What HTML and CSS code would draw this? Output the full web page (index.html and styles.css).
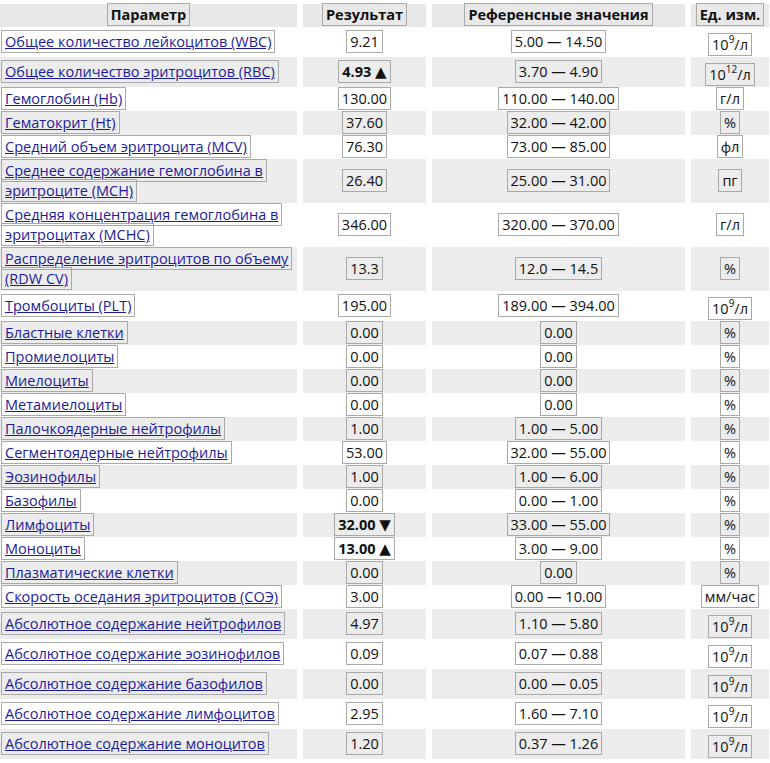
FILE: index.html
```html
<!DOCTYPE html>
<html lang="ru">
<head>
<meta charset="utf-8">
<title>Результаты анализа</title>
<link rel="stylesheet" href="styles.css">
</head>
<body>
<table class="results">
  <colgroup>
    <col class="c-param">
    <col class="c-result">
    <col class="c-ref">
    <col class="c-unit">
  </colgroup>
  <thead>
    <tr>
      <th><span class="box">Параметр</span></th>
      <th><span class="box">Результат</span></th>
      <th><span class="box">Референсные значения</span></th>
      <th><span class="box">Ед. изм.</span></th>
    </tr>
  </thead>
  <tbody>
    <tr><td class="param"><span class="box"><a href="#">Общее количество лейкоцитов (WBC)</a></span></td><td><span class="box">9.21</span></td><td><span class="box">5.00 — 14.50</span></td><td><span class="box">10<sup>9</sup>/л</span></td></tr>
    <tr><td class="param"><span class="box"><a href="#">Общее количество эритроцитов (RBC)</a></span></td><td><span class="box flag">4.93 <span class="arrow">▲</span></span></td><td><span class="box">3.70 — 4.90</span></td><td><span class="box">10<sup>12</sup>/л</span></td></tr>
    <tr><td class="param"><span class="box"><a href="#">Гемоглобин (Hb)</a></span></td><td><span class="box">130.00</span></td><td><span class="box">110.00 — 140.00</span></td><td><span class="box">г/л</span></td></tr>
    <tr><td class="param"><span class="box"><a href="#">Гематокрит (Ht)</a></span></td><td><span class="box">37.60</span></td><td><span class="box">32.00 — 42.00</span></td><td><span class="box">%</span></td></tr>
    <tr><td class="param"><span class="box"><a href="#">Средний объем эритроцита (MCV)</a></span></td><td><span class="box">76.30</span></td><td><span class="box">73.00 — 85.00</span></td><td><span class="box">фл</span></td></tr>
    <tr><td class="param"><span class="box"><a href="#">Среднее содержание гемоглобина в эритроците (MCH)</a></span></td><td><span class="box">26.40</span></td><td><span class="box">25.00 — 31.00</span></td><td><span class="box">пг</span></td></tr>
    <tr><td class="param"><span class="box"><a href="#">Средняя концентрация гемоглобина в эритроцитах (MCHC)</a></span></td><td><span class="box">346.00</span></td><td><span class="box">320.00 — 370.00</span></td><td><span class="box">г/л</span></td></tr>
    <tr><td class="param"><span class="box"><a href="#">Распределение эритроцитов по объему (RDW CV)</a></span></td><td><span class="box">13.3</span></td><td><span class="box">12.0 — 14.5</span></td><td><span class="box">%</span></td></tr>
    <tr><td class="param"><span class="box"><a href="#">Тромбоциты (PLT)</a></span></td><td><span class="box">195.00</span></td><td><span class="box">189.00 — 394.00</span></td><td><span class="box">10<sup>9</sup>/л</span></td></tr>
    <tr><td class="param"><span class="box"><a href="#">Бластные клетки</a></span></td><td><span class="box">0.00</span></td><td><span class="box">0.00</span></td><td><span class="box">%</span></td></tr>
    <tr><td class="param"><span class="box"><a href="#">Промиелоциты</a></span></td><td><span class="box">0.00</span></td><td><span class="box">0.00</span></td><td><span class="box">%</span></td></tr>
    <tr><td class="param"><span class="box"><a href="#">Миелоциты</a></span></td><td><span class="box">0.00</span></td><td><span class="box">0.00</span></td><td><span class="box">%</span></td></tr>
    <tr><td class="param"><span class="box"><a href="#">Метамиелоциты</a></span></td><td><span class="box">0.00</span></td><td><span class="box">0.00</span></td><td><span class="box">%</span></td></tr>
    <tr><td class="param"><span class="box"><a href="#">Палочкоядерные нейтрофилы</a></span></td><td><span class="box">1.00</span></td><td><span class="box">1.00 — 5.00</span></td><td><span class="box">%</span></td></tr>
    <tr><td class="param"><span class="box"><a href="#">Сегментоядерные нейтрофилы</a></span></td><td><span class="box">53.00</span></td><td><span class="box">32.00 — 55.00</span></td><td><span class="box">%</span></td></tr>
    <tr><td class="param"><span class="box"><a href="#">Эозинофилы</a></span></td><td><span class="box">1.00</span></td><td><span class="box">1.00 — 6.00</span></td><td><span class="box">%</span></td></tr>
    <tr><td class="param"><span class="box"><a href="#">Базофилы</a></span></td><td><span class="box">0.00</span></td><td><span class="box">0.00 — 1.00</span></td><td><span class="box">%</span></td></tr>
    <tr><td class="param"><span class="box"><a href="#">Лимфоциты</a></span></td><td><span class="box flag">32.00 <span class="arrow">▼</span></span></td><td><span class="box">33.00 — 55.00</span></td><td><span class="box">%</span></td></tr>
    <tr><td class="param"><span class="box"><a href="#">Моноциты</a></span></td><td><span class="box flag">13.00 <span class="arrow">▲</span></span></td><td><span class="box">3.00 — 9.00</span></td><td><span class="box">%</span></td></tr>
    <tr><td class="param"><span class="box"><a href="#">Плазматические клетки</a></span></td><td><span class="box">0.00</span></td><td><span class="box">0.00</span></td><td><span class="box">%</span></td></tr>
    <tr><td class="param"><span class="box"><a href="#">Скорость оседания эритроцитов (СОЭ)</a></span></td><td><span class="box">3.00</span></td><td><span class="box">0.00 — 10.00</span></td><td><span class="box">мм/час</span></td></tr>
    <tr><td class="param"><span class="box"><a href="#">Абсолютное содержание нейтрофилов</a></span></td><td><span class="box">4.97</span></td><td><span class="box">1.10 — 5.80</span></td><td><span class="box">10<sup>9</sup>/л</span></td></tr>
    <tr><td class="param"><span class="box"><a href="#">Абсолютное содержание эозинофилов</a></span></td><td><span class="box">0.09</span></td><td><span class="box">0.07 — 0.88</span></td><td><span class="box">10<sup>9</sup>/л</span></td></tr>
    <tr><td class="param"><span class="box"><a href="#">Абсолютное содержание базофилов</a></span></td><td><span class="box">0.00</span></td><td><span class="box">0.00 — 0.05</span></td><td><span class="box">10<sup>9</sup>/л</span></td></tr>
    <tr><td class="param"><span class="box"><a href="#">Абсолютное содержание лимфоцитов</a></span></td><td><span class="box">2.95</span></td><td><span class="box">1.60 — 7.10</span></td><td><span class="box">10<sup>9</sup>/л</span></td></tr>
    <tr><td class="param"><span class="box"><a href="#">Абсолютное содержание моноцитов</a></span></td><td><span class="box">1.20</span></td><td><span class="box">0.37 — 1.26</span></td><td><span class="box">10<sup>9</sup>/л</span></td></tr>
  </tbody>
</table>
</body>
</html>
```

FILE: styles.css
```css
html, body {
  margin: 0;
  padding: 0;
  background: #ffffff;
}

body {
  font-family: "Open Sans", "Noto Sans", sans-serif;
  font-size: 14.5px;
  line-height: 20px;
  color: #111111;
  padding-top: 4px;
}

.results {
  border-collapse: separate;
  border-spacing: 6px 0;
  table-layout: fixed;
  width: 781px;
  margin-left: -6px;
}

.c-param { width: 297px; }
.c-result { width: 123px; }
.c-ref { width: 253px; }
.c-unit { width: 78px; }

.results th,
.results td {
  padding: 2px 0;
  text-align: center;
  vertical-align: middle;
}

.results th {
  background: #e8e8e8;
  font-weight: bold;
  padding: 1px 0 2px;
}

.results tbody tr:nth-child(even) td {
  background: #ececec;
}

.results td.param {
  text-align: left;
  padding-left: 1px;
}

.box {
  border: 1px solid #a9a9a9;
  padding: 1px 3px;
  -webkit-box-decoration-break: clone;
  box-decoration-break: clone;
}

.flag {
  font-weight: bold;
}

.arrow {
  font-family: "DejaVu Sans", sans-serif;
  font-size: 15px;
  line-height: 0;
}

.box a {
  color: #1c1c9a;
  text-decoration: underline;
}

sup {
  font-size: 10px;
  vertical-align: 7px;
}
```
